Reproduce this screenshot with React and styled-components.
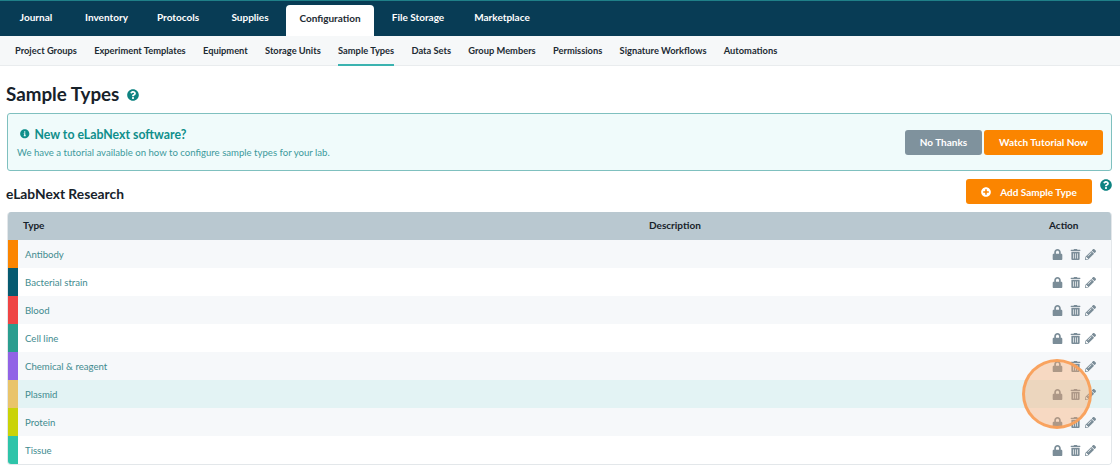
import React from "react";
import styled, {createGlobalStyle} from "styled-components";
import {FaLock, FaTrashAlt, FaPencilAlt, FaQuestionCircle, FaInfoCircle, FaPlusCircle} from "react-icons/fa";

const GlobalStyle = createGlobalStyle`
    html, body {
        margin: 0;
        padding: 0;
        background: #fff;
        font-family: "Lato", "Open Sans", sans-serif;
        overflow: hidden;
    }
`;

const Page = styled.div`
    position: relative;
    width: 1120px;
    height: 471px;
    overflow: hidden;
`;

const TopBar = styled.nav`
    display: flex;
    height: 35px;
    padding-left: 1px;
    background: #083c55;
    border-top: 1px solid #1f8088;
`;

const TopTab = styled.div`
    display: flex;
    align-items: center;
    justify-content: center;
    width: ${props => props.$width}px;
    margin-top: ${props => props.$active ? 4 : 0}px;
    padding-bottom: ${props => props.$active ? 5 : 3}px;
    box-sizing: border-box;
    border-radius: 4px 4px 0 0;
    background: ${props => props.$active ? "#fff" : "none"};
    color: ${props => props.$active ? "#1d2b33" : "#fff"};
    font-size: 10px;
    font-weight: 700;
`;

const SubBar = styled.nav`
    display: flex;
    gap: 17.3px;
    height: 30px;
    padding-left: 15px;
    background: #f6f8f9;
    border-bottom: 1px solid #e9ecee;
    box-sizing: border-box;
`;

const SubTab = styled.div`
    display: flex;
    align-items: center;
    height: 30px;
    box-sizing: border-box;
    border-bottom: 2px solid ${props => props.$active ? "#3bb3b0" : "transparent"};
    color: #1d2b33;
    font-size: 9.3px;
    font-weight: 700;
    white-space: nowrap;
`;

const Content = styled.main`
    padding: 0 8px 0 7px;
`;

const Title = styled.h1`
    display: flex;
    align-items: center;
    gap: 8px;
    height: 47px;
    box-sizing: border-box;
    margin: 0 0 0 -1px;
    padding-top: 8px;
    color: #17222a;
    font-size: 18.8px;
    font-weight: 700;
    svg {
        color: #0e8381;
        font-size: 12px;
        margin-top: 2px;
    }
`;

const Alert = styled.section`
    display: flex;
    align-items: center;
    justify-content: space-between;
    height: 58px;
    box-sizing: border-box;
    padding: 0 8px 0 9px;
    background: #f0fbfb;
    border: 1px solid #7fc0bf;
    border-radius: 3px;
`;

const AlertHead = styled.div`
    display: flex;
    align-items: center;
    gap: 5px;
    padding-left: 3px;
    margin-bottom: 5px;
    color: #0f8f8b;
    font-size: 12.3px;
    font-weight: 700;
    svg {
        font-size: 9.5px;
    }
`;

const AlertText = styled.div`
    color: #3d9a9c;
    font-size: 9.6px;
`;

const ButtonRow = styled.div`
    display: flex;
    gap: 2px;
`;

const Button = styled.button`
    display: flex;
    align-items: center;
    justify-content: center;
    gap: 9px;
    width: ${props => props.$width}px;
    height: 25px;
    padding: 0;
    border: none;
    border-radius: 3px;
    background: ${props => props.$gray ? "#7f929d" : "#fb8500"};
    color: #fff;
    font-family: inherit;
    font-size: 10px;
    font-weight: 700;
    svg {
        font-size: 10px;
    }
`;

const GroupHead = styled.div`
    display: flex;
    align-items: center;
    height: 41px;
`;

const GroupName = styled.h2`
    flex: 1;
    margin: 3px 0 0 -1px;
    color: #17222a;
    font-size: 13.8px;
    font-weight: 700;
`;

const GroupHelp = styled.span`
    display: flex;
    width: 20px;
    justify-content: flex-end;
    margin-bottom: 13px;
    color: #0e8381;
    font-size: 12px;
`;

const Table = styled.div`
    border: 1px solid #e3e7ea;
    border-top: none;
    border-radius: 4px;
    overflow: hidden;
`;

const HeadRow = styled.div`
    display: grid;
    grid-template-columns: 626px 1fr 62px;
    align-items: center;
    height: 28px;
    padding-left: 15px;
    padding-bottom: 3px;
    box-sizing: border-box;
    background: #b9c8d0;
    color: #17222a;
    font-size: 10px;
    font-weight: 700;
`;

const Row = styled.div`
    display: grid;
    grid-template-columns: 10px 1fr 59px;
    height: 28px;
    background: ${props => props.$highlight ? "#e3f3f4" : props.$odd ? "#f6f8fa" : "#fff"};
`;

const Swatch = styled.div`
    background: ${props => props.$color};
`;

const Name = styled.div`
    display: flex;
    align-items: center;
    padding-left: 7px;
    color: #428b8f;
    font-size: 9.6px;
`;

const Actions = styled.div`
    display: flex;
    align-items: center;
    gap: 7px;
    color: #7b8d98;
    font-size: 11px;
    svg:last-child {
        margin-left: -3px;
    }
`;

const Spotlight = styled.div`
    position: absolute;
    left: 1022px;
    top: 359px;
    width: 70px;
    height: 70px;
    box-sizing: border-box;
    border: 3px solid rgba(249, 160, 90, 0.95);
    border-radius: 50%;
    background: rgba(250, 170, 110, 0.4);
`;

const topTabs = [
    {label: "Journal", width: 70},
    {label: "Inventory", width: 71},
    {label: "Protocols", width: 72},
    {label: "Supplies", width: 72},
    {label: "Configuration", width: 88, active: true},
    {label: "File Storage", width: 88},
    {label: "Marketplace", width: 80},
];

const subTabs = ["Project Groups", "Experiment Templates", "Equipment", "Storage Units", "Sample Types", "Data Sets", "Group Members", "Permissions", "Signature Workflows", "Automations"];

const sampleTypes = [
    {name: "Antibody", color: "#fb8500"},
    {name: "Bacterial strain", color: "#065a70"},
    {name: "Blood", color: "#ef4444"},
    {name: "Cell line", color: "#2a9d8f"},
    {name: "Chemical & reagent", color: "#9163e6"},
    {name: "Plasmid", color: "#e9c46a"},
    {name: "Protein", color: "#cad308"},
    {name: "Tissue", color: "#2ec4a9"},
];

const App = () => {
    return (
        <Page>
            <GlobalStyle />
            <TopBar>
                {topTabs.map(tab => (
                    <TopTab key={tab.label} $width={tab.width} $active={tab.active}>{tab.label}</TopTab>
                ))}
            </TopBar>
            <SubBar>
                {subTabs.map(tab => (
                    <SubTab key={tab} $active={tab === "Sample Types"}>{tab}</SubTab>
                ))}
            </SubBar>
            <Content>
                <Title>Sample Types <FaQuestionCircle /></Title>
                <Alert>
                    <div>
                        <AlertHead><FaInfoCircle /> New to eLabNext software?</AlertHead>
                        <AlertText>We have a tutorial available on how to configure sample types for your lab.</AlertText>
                    </div>
                    <ButtonRow>
                        <Button $gray $width={77}>No Thanks</Button>
                        <Button $width={119}>Watch Tutorial Now</Button>
                    </ButtonRow>
                </Alert>
                <GroupHead>
                    <GroupName>eLabNext Research</GroupName>
                    <Button $width={126}><FaPlusCircle /> Add Sample Type</Button>
                    <GroupHelp><FaQuestionCircle /></GroupHelp>
                </GroupHead>
                <Table>
                    <HeadRow>
                        <span>Type</span>
                        <span>Description</span>
                        <span>Action</span>
                    </HeadRow>
                    {sampleTypes.map((type, index) => (
                        <Row key={type.name} $odd={index % 2 === 0} $highlight={type.name === "Plasmid"}>
                            <Swatch $color={type.color} />
                            <Name>{type.name}</Name>
                            <Actions>
                                <FaLock />
                                <FaTrashAlt />
                                <FaPencilAlt />
                            </Actions>
                        </Row>
                    ))}
                </Table>
            </Content>
            <Spotlight />
        </Page>
    );
}

export default App;
